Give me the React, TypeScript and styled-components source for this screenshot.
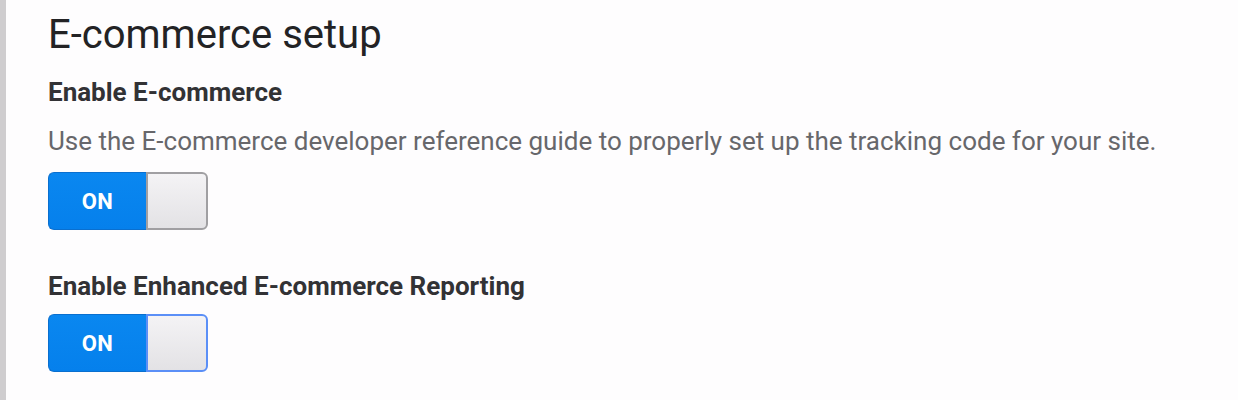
import React from 'react';
import styled, { createGlobalStyle } from 'styled-components';

const GlobalStyle = createGlobalStyle`
  html, body {
    margin: 0;
    padding: 0;
    background: #fefdfe;
    font-family: Roboto, "Liberation Sans", sans-serif;
  }
`;

const Page = styled.div`
  display: flex;
  height: 400px;
  overflow: hidden;
`;

const SideRule = styled.div`
  width: 6px;
  flex: none;
  background: #cfcdcf;
`;

const Content = styled.div`
  padding: 11px 0 0 42px;
  display: flex;
  flex-direction: column;
`;

const Title = styled.h1`
  margin: 0;
  font-size: 40px;
  font-weight: 400;
  line-height: 48px;
  color: #232325;
`;

const Section = styled.div<{ $top: number }>`
  display: flex;
  flex-direction: column;
  margin-top: ${(p) => p.$top}px;
`;

const Label = styled.h3`
  margin: 0;
  font-size: 26px;
  font-weight: 700;
  line-height: 32px;
  color: #323235;
`;

const Help = styled.p`
  margin: 17px 0 0;
  font-size: 26px;
  line-height: 32px;
  color: #67676b;
`;

const Toggle = styled.button<{ $gap: number }>`
  margin-top: ${(p) => p.$gap}px;
  display: flex;
  width: 160px;
  height: 58px;
  padding: 0;
  border: none;
  background: none;
  cursor: pointer;
`;

const OnPart = styled.span`
  width: 98px;
  height: 100%;
  display: flex;
  align-items: center;
  justify-content: center;
  background: linear-gradient(#0a87f0, #0580ec);
  border: 1px solid #0a6fcf;
  border-right: none;
  border-radius: 6px 0 0 6px;
  box-sizing: border-box;
  color: #fff;
  font-family: Roboto, sans-serif;
  font-weight: 700;
  font-size: 22px;
  letter-spacing: 0.3px;
`;

const Knob = styled.span<{ $focus?: boolean }>`
  flex: 1;
  height: 100%;
  box-sizing: border-box;
  background: linear-gradient(#f4f3f5, #e3e2e5);
  border: 2px solid ${(p) => (p.$focus ? '#5b8ff7' : '#a09fa2')};
  border-radius: 0 6px 6px 0;
`;

function Switch({ focus, gap }: { focus?: boolean; gap: number }) {
  return (
    <Toggle type="button" aria-pressed="true" $gap={gap}>
      <OnPart>ON</OnPart>
      <Knob $focus={focus} />
    </Toggle>
  );
}

export default function App() {
  return (
    <Page>
      <GlobalStyle />
      <SideRule />
      <Content>
        <Title>E-commerce setup</Title>
        <Section $top={17}>
          <Label>Enable E-commerce</Label>
          <Help>
            Use the E-commerce developer reference guide to properly set up the tracking code for your site.
          </Help>
          <Switch gap={15} />
        </Section>
        <Section $top={40}>
          <Label>Enable Enhanced E-commerce Reporting</Label>
          <Switch focus gap={12} />
        </Section>
      </Content>
    </Page>
  );
}
